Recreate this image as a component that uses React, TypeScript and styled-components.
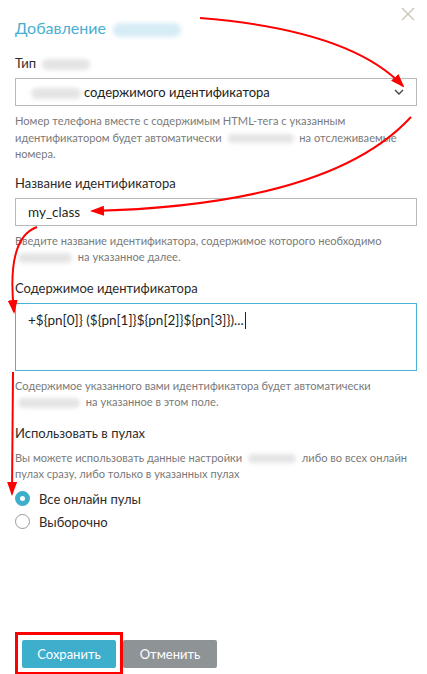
import React from "react";
import styled, { createGlobalStyle } from "styled-components";

const GlobalStyle = createGlobalStyle`
  html, body {
    margin: 0;
    padding: 0;
    background: #fff;
  }
  body {
    font-family: Lato, "Open Sans", sans-serif;
    color: #333;
  }
`;

const Modal = styled.div`
  /* dimension */
  width: 427px;
  height: 674px;
  box-sizing: border-box;
  padding: 15px 10px 0 15px;
  //display
  display: flex;
  flex-direction: column;
  position: relative;
  overflow: hidden;
  background: #fff;
`;

const Close = styled.div`
  position: absolute;
  top: 6px;
  right: 11px;
  width: 16px;
  height: 16px;
  svg {
    display: block;
  }
`;

const Title = styled.h2`
  margin: 0 0 12px 0;
  font-size: 16px;
  font-weight: 400;
  color: #4aaed0;
  line-height: 26px;
`;

/* blurred-out words from the screenshot */
const Blur = styled.span<{ $w: number; $tone?: string }>`
  display: inline-block;
  vertical-align: middle;
  width: ${(p) => p.$w}px;
  height: 0.85em;
  margin: 0 3px;
  border-radius: 8px;
  background: ${(p) => p.$tone || "#e4e4e4"};
  filter: blur(2px);
`;

const Field = styled.div<{ $after?: number }>`
  display: flex;
  flex-direction: column;
  margin-bottom: ${(p) => p.$after ?? 12}px;
`;

const Label = styled.label`
  font-size: 13px;
  line-height: 20px;
  color: #2b2b2b;
  margin-bottom: 5px;
`;

const Box = styled.div<{ $focused?: boolean; $tall?: boolean }>`
  box-sizing: border-box;
  height: ${(p) => (p.$tall ? "68px" : "28px")};
  border: 1px solid ${(p) => (p.$focused ? "#4ab3d3" : "#b9b9b9")};
  padding: ${(p) => (p.$tall ? "8px 12px" : "0 12px")};
  display: flex;
  align-items: ${(p) => (p.$tall ? "flex-start" : "center")};
  justify-content: space-between;
  font-size: 13px;
  color: #222;
`;

const Value = styled.span`
  font-size: 13.5px;
  color: #1f1f1f;
`;

const Caret = styled.span`
  display: inline-block;
  width: 1px;
  height: 17px;
  background: #222;
  margin-left: 1px;
  vertical-align: -4px;
`;

const Help = styled.p<{ $tight?: boolean }>`
  margin: ${(p) => (p.$tight ? "2px" : "7px")} 0 0 0;
  font-size: 11.1px;
  line-height: 16.5px;
  color: #7a7a7a;
`;

const RadioList = styled.div`
  display: flex;
  flex-direction: column;
  gap: 7px;
`;

const RadioRow = styled.label`
  display: flex;
  align-items: center;
  gap: 9px;
  font-size: 13px;
  color: #2b2b2b;
  line-height: 16px;
`;

const RadioDot = styled.span<{ $checked?: boolean }>`
  box-sizing: border-box;
  width: 15px;
  height: 15px;
  border-radius: 50%;
  border: ${(p) => (p.$checked ? "5px solid #3eaecd" : "1px solid #9a9a9a")};
  background: #fff;
`;

const Footer = styled.div`
  margin-top: auto;
  display: flex;
  gap: 7px;
  padding: 0 0 6px 7px;
`;

const Button = styled.button<{ $primary?: boolean }>`
  width: 94px;
  height: 28px;
  border: none;
  border-radius: 2px;
  font-family: inherit;
  font-size: 13px;
  color: #fff;
  background: ${(p) => (p.$primary ? "#3eaecd" : "#8e9396")};
`;

const Annotations = styled.svg`
  position: absolute;
  left: 0;
  top: 0;
  pointer-events: none;
`;

const Chevron = () => (
  <svg width="10" height="6" viewBox="0 0 10 6">
    <path d="M1 1l4 4 4-4" fill="none" stroke="#444" strokeWidth="1.4" />
  </svg>
);

const App = () => {
  return (
    <>
      <GlobalStyle />
      <Modal>
        <Close>
          <svg width="16" height="16" viewBox="0 0 16 16">
            <path d="M2 2l12 12M14 2L2 14" stroke="#cbc3b8" strokeWidth="1.3" />
          </svg>
        </Close>
        <Title>
          Добавление <Blur $w={68} $tone="#d6ecf5" />
        </Title>

        <Field $after={10}>
          <Label>
            Тип <Blur $w={48} />
          </Label>
          <Box>
            <span>
              <Blur $w={50} />
              содержимого идентификатора
            </span>
            <Chevron />
          </Box>
          <Help>
            Номер телефона вместе с содержимым HTML-тега с указанным идентификатором будет
            автоматически <Blur $w={66} /> на отслеживаемые номера.
          </Help>
        </Field>

        <Field>
          <Label>Название идентификатора</Label>
          <Box>
            <Value>my_class</Value>
          </Box>
          <Help>
            Введите название идентификатора, содержимое которого необходимо <Blur $w={54} /> на
            указанное далее.
          </Help>
        </Field>

        <Field>
          <Label>Содержимое идентификатора</Label>
          <Box $focused $tall>
            <Value>
              +${"{"}pn[0]{"}"} (${"{"}pn[1]{"}"}${"{"}pn[2]{"}"}${"{"}pn[3]{"}"})...
              <Caret />
            </Value>
          </Box>
          <Help>
            Содержимое указанного вами идентификатора будет автоматически <Blur $w={62} /> на
            указанное в этом поле.
          </Help>
        </Field>

        <Field $after={8}>
          <Label>Использовать в пулах</Label>
          <Help $tight>
            Вы можете использовать данные настройки <Blur $w={48} /> либо во всех онлайн пулах
            сразу, либо только в указанных пулах
          </Help>
        </Field>

        <RadioList>
          <RadioRow>
            <RadioDot $checked />
            Все онлайн пулы
          </RadioRow>
          <RadioRow>
            <RadioDot />
            Выборочно
          </RadioRow>
        </RadioList>

        <Footer>
          <Button $primary>Сохранить</Button>
          <Button>Отменить</Button>
        </Footer>

        <Annotations width="427" height="674" viewBox="0 0 427 674">
          <defs>
            <marker id="head" viewBox="0 0 14 10" refX="12" refY="5" markerWidth="7" markerHeight="5" orient="auto">
              <path d="M0 0L14 5L0 10z" fill="#f00" />
            </marker>
          </defs>
          <g fill="none" stroke="#f00" strokeWidth="2">
            <path d="M200 18 Q 350 30 403 86" markerEnd="url(#head)" />
            <path d="M411 117 Q 330 205 92 211" markerEnd="url(#head)" />
            <path d="M37 227 Q 6 238 14 312" markerEnd="url(#head)" />
            <path d="M13 372 L 12 494" markerEnd="url(#head)" />
          </g>
          <rect x="16.5" y="633.5" width="105" height="40" fill="none" stroke="#f00" strokeWidth="3" />
        </Annotations>
      </Modal>
    </>
  );
};

export default App;
